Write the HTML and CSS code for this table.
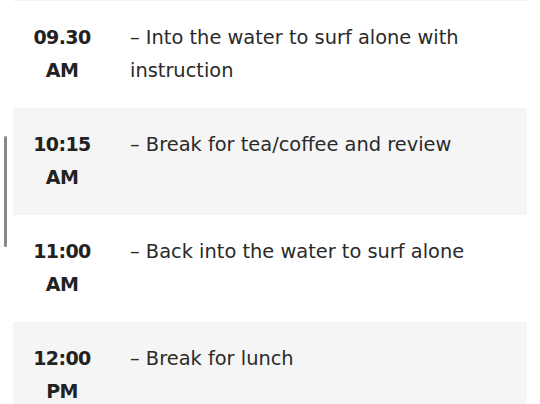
FILE: index.html
```html
<!DOCTYPE html>
<html lang="en">
<head>
<meta charset="utf-8">
<title>Schedule</title>
<link rel="stylesheet" href="styles.css">
</head>
<body>
<div class="page">
  <div class="scrollbar"></div>
  <div class="schedule">
    <div class="row">
      <div class="time">09.30<br>AM</div>
      <div class="desc">– Into the water to surf alone with instruction</div>
    </div>
    <div class="row alt">
      <div class="time">10:15<br>AM</div>
      <div class="desc">– Break for tea/coffee and review</div>
    </div>
    <div class="row">
      <div class="time">11:00<br>AM</div>
      <div class="desc">– Back into the water to surf alone</div>
    </div>
    <div class="row alt">
      <div class="time">12:00<br>PM</div>
      <div class="desc">– Break for lunch</div>
    </div>
  </div>
</div>
</body>
</html>
```
FILE: styles.css
```css
html, body {
  margin: 0;
  padding: 0;
  background: #ffffff;
  overflow: hidden;
}
.page {
  position: relative;
  width: 540px;
  height: 404px;
  overflow: hidden;
  font-family: "DejaVu Sans", "Open Sans", sans-serif;
}
.scrollbar {
  position: absolute;
  left: 4px;
  top: 136px;
  width: 3px;
  height: 111px;
  border-radius: 2px;
  background: #888888;
}
.schedule {
  margin: 0 13px;
  border-top: 1px solid #f4f4f4;
}
.row {
  display: grid;
  grid-template-columns: 98px 1fr;
  column-gap: 19px;
  padding: 20px 0 21px;
  height: 66px;
  box-sizing: content-box;
  background: #ffffff;
}
.row.alt {
  background: #f5f5f5;
}
.time {
  text-align: center;
  font-weight: 700;
  font-size: 19px;
  letter-spacing: -0.6px;
  line-height: 33px;
  color: #222222;
}
.desc {
  font-size: 19.4px;
  line-height: 33px;
  color: #2a2a2a;
}
```
